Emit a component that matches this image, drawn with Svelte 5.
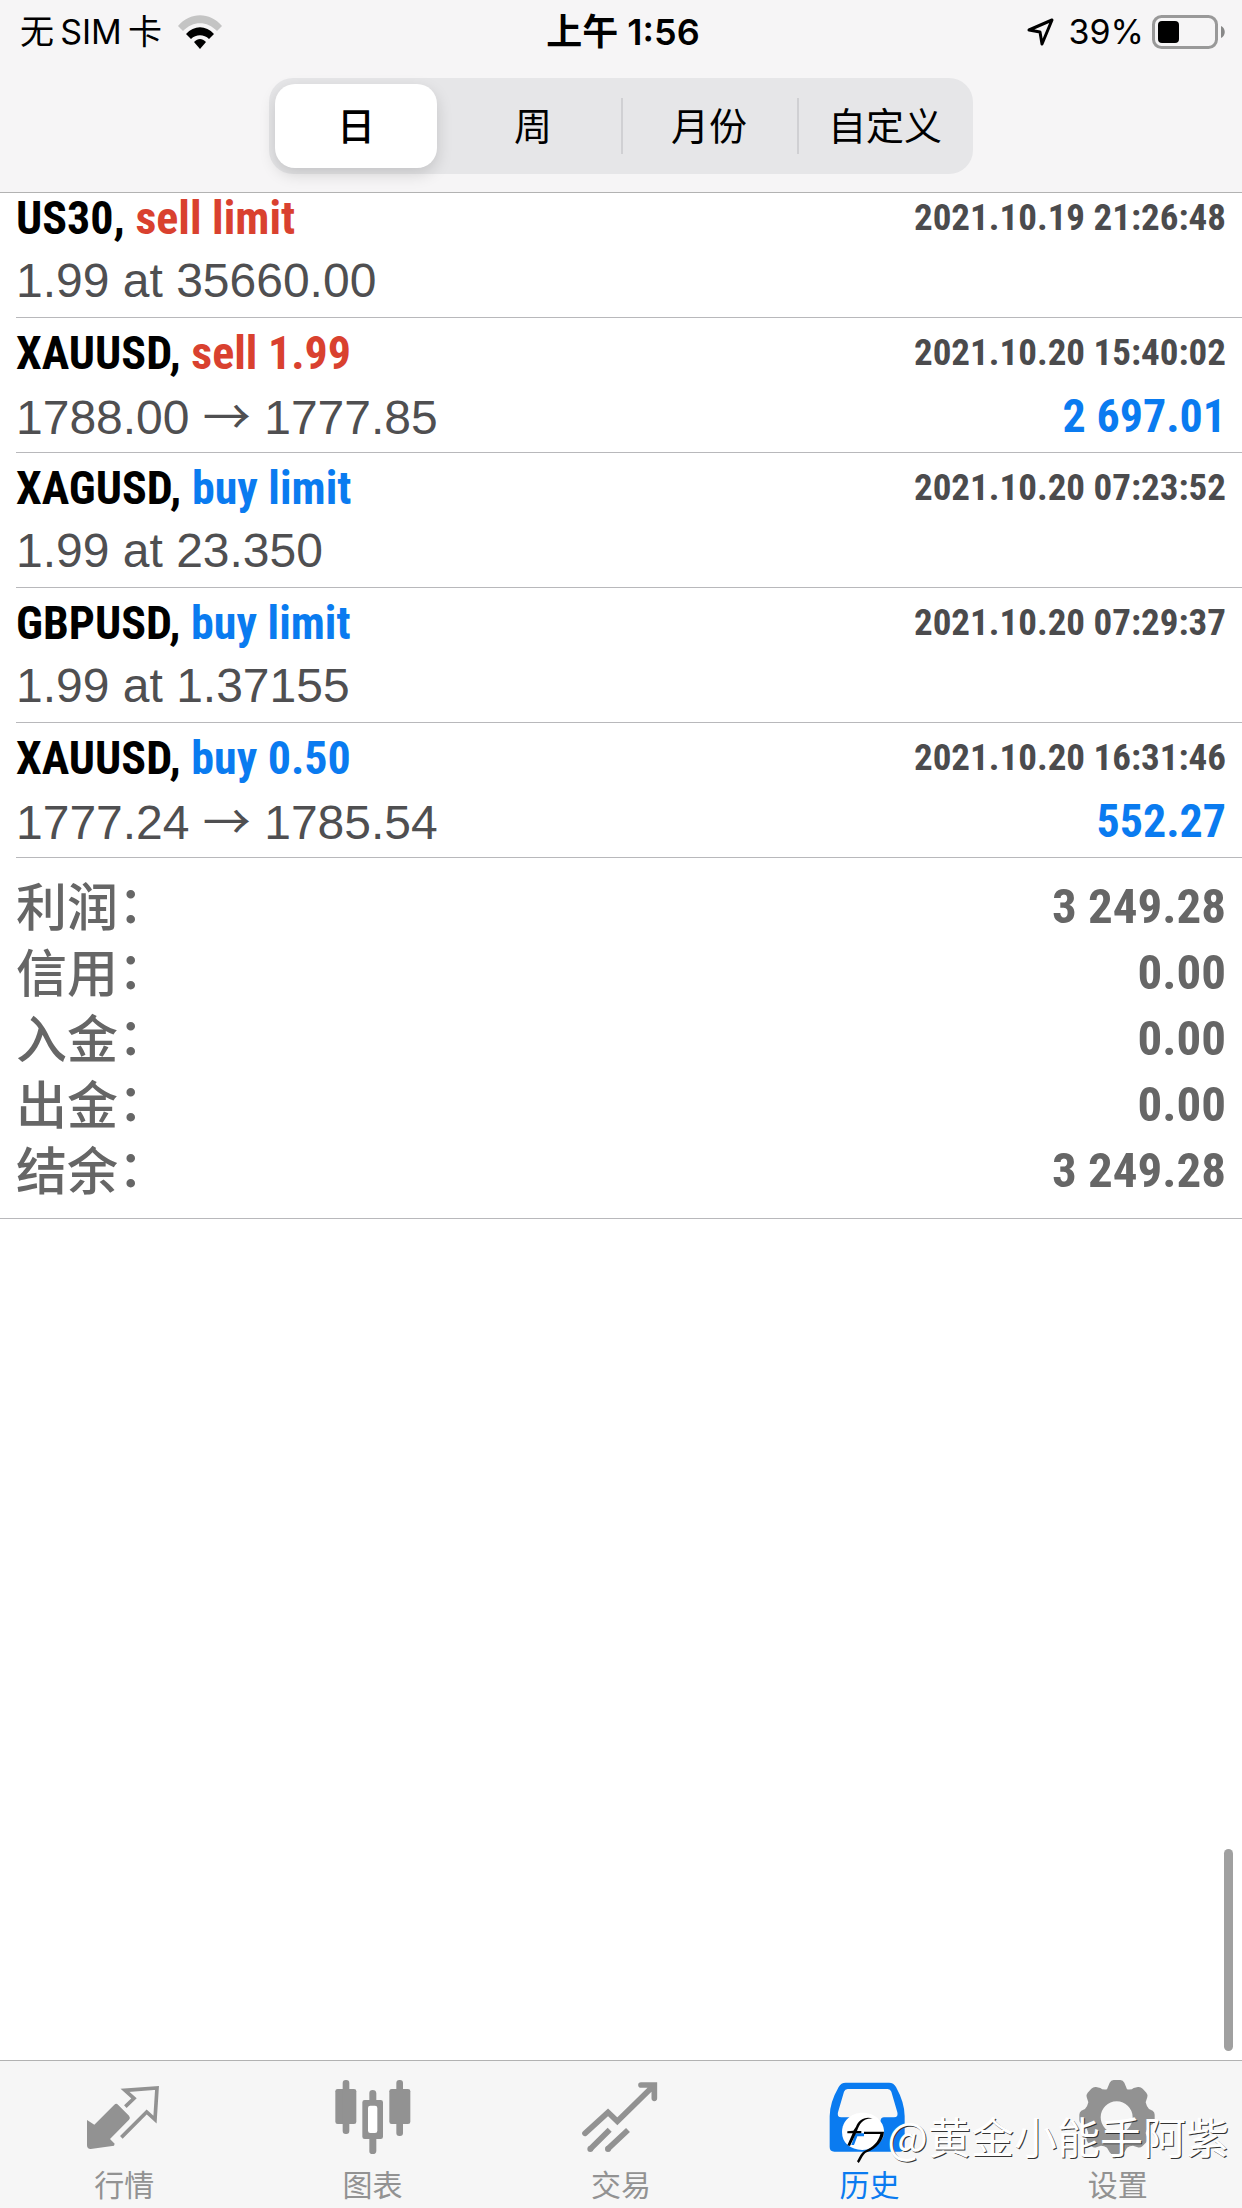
<script>
  const periods = ['日', '周', '月份', '自定义'];
  let period = $state('日');

  const deals = [
    { symbol: 'US30', side: 'sell', action: 'sell limit', time: '2021.10.19 21:26:48', volume: '1.99', price: '35660.00' },
    { symbol: 'XAUUSD', side: 'sell', action: 'sell 1.99', time: '2021.10.20 15:40:02', open: '1788.00', close: '1777.85', profit: '2 697.01' },
    { symbol: 'XAGUSD', side: 'buy', action: 'buy limit', time: '2021.10.20 07:23:52', volume: '1.99', price: '23.350' },
    { symbol: 'GBPUSD', side: 'buy', action: 'buy limit', time: '2021.10.20 07:29:37', volume: '1.99', price: '1.37155' },
    { symbol: 'XAUUSD', side: 'buy', action: 'buy 0.50', time: '2021.10.20 16:31:46', open: '1777.24', close: '1785.54', profit: '552.27' }
  ];

  const summary = [
    { label: '利润', value: '3 249.28' },
    { label: '信用', value: '0.00' },
    { label: '入金', value: '0.00' },
    { label: '出金', value: '0.00' },
    { label: '结余', value: '3 249.28' }
  ];
</script>

<div class="screen">
  <header class="top-bar">
    <div class="status-bar">
      <div class="status-left">
        <span>无&thinsp;SIM&thinsp;卡</span>
        <svg class="wifi" viewBox="0 0 44 34">
          <path fill="#c4c4c4" d="M0 11C12-3.500 32-3.500 44 11l-5 5C29 5.500 15 5.500 5 16z"/>
          <path d="M8 19c8-9 20-9 28 0l-5 5c-5-5-13-5-18 0z"/>
          <path d="M16 27c4-4 8-4 12 0l-6 7z"/>
        </svg>
      </div>
      <div class="status-time">上午 1:56</div>
      <div class="status-right">
        <svg class="location" viewBox="0 0 28 28">
          <path fill="none" stroke="#000" stroke-width="3" stroke-linejoin="round" d="M2 12 25 2 15 26 13 14z"/>
        </svg>
        <span>39%</span>
        <svg class="battery" viewBox="0 0 74 34">
          <rect x="1.500" y="1.500" width="63" height="31" rx="8" fill="none" stroke="#999" stroke-width="3"/>
          <rect x="6" y="6" width="21" height="22" rx="4"/>
          <path fill="#888" d="M69 11c5 2 5 10 0 12z"/>
        </svg>
      </div>
    </div>

    <div class="segmented">
      {#each periods as name}
        <button class:active={period === name} onclick={() => (period = name)}>{name}</button>
      {/each}
    </div>
  </header>

  <main class="history">
    <ul class="deals">
      {#each deals as deal}
        <li class="deal">
          <div class="deal-row">
            <h3 class="deal-title">{deal.symbol}, <span class={deal.side}>{deal.action}</span></h3>
            <time class="deal-time">{deal.time}</time>
          </div>
          <div class="deal-row">
            {#if deal.profit}
              <span class="deal-price">{deal.open} <span class="arrow">→</span> {deal.close}</span>
              <span class="deal-profit">{deal.profit}</span>
            {:else}
              <span class="deal-price">{deal.volume} at {deal.price}</span>
            {/if}
          </div>
        </li>
      {/each}
    </ul>

    <dl class="summary">
      {#each summary as item}
        <div class="summary-row">
          <dt>{item.label}<span class="colon">：</span></dt>
          <dd>{item.value}</dd>
        </div>
      {/each}
    </dl>

    <div class="scroll-thumb"></div>
  </main>

  <nav class="tab-bar">
    <a class="tab" href="#quotes">
      <svg viewBox="252 108 240 240">
        <path fill="currentColor" d="M261 240l22 14 60-60q6-5 11 0l33 33q5 6 0 12l-57 58 14 14-2 6-70 10q-11 0-11-11z"/>
        <path fill="none" stroke="currentColor" stroke-width="11" d="M376 200l26-25-27-24 96-7-6 95-25-23-76 76"/>
      </svg>
      <span>行情</span>
    </a>
    <a class="tab" href="#charts">
      <svg viewBox="998 108 240 240">
        <g fill="currentColor">
          <rect x="1005" y="147" width="63" height="105" rx="7"/>
          <rect x="1027" y="120" width="20" height="162" rx="9"/>
          <rect x="1167" y="147" width="63" height="105" rx="7"/>
          <rect x="1188" y="120" width="20" height="168" rx="9"/>
          <path d="M1107 180v-20q0-10 10-10t11 10v20h13q7 0 7 7v103q0 7-7 7h-13v35q0 10-11 10t-10-10v-35h-14q-7 0-7-7V187q0-7 7-7z"/>
        </g>
        <rect x="1103" y="197" width="28" height="82" rx="7" fill="#fff"/>
      </svg>
      <span>图表</span>
    </a>
    <a class="tab" href="#trade">
      <svg viewBox="123 108 240 240">
        <g fill="none" stroke="currentColor" stroke-width="17">
          <path stroke-linecap="round" d="M135 280l69-63 28 27 108-106M303 135h40v40"/>
          <path d="M150 328l59-59M202 328l62-58"/>
        </g>
        <g fill="currentColor">
          <circle cx="151" cy="327" r="9"/>
          <circle cx="204" cy="327" r="9"/>
        </g>
      </svg>
      <span>交易</span>
    </a>
    <a class="tab active" href="#history">
      <svg viewBox="118 108 240 240">
        <path fill="currentColor" fill-rule="evenodd" d="M168 128h130q14 0 21 13 26 47 26 88v92q0 14-14 14H134q-14 0-14-14v-92q0-41 27-88 7-13 21-13zm6 19q-8 0-11 8l-18 62q-4 15 10 15h30q9 0 10 9 4 20 20 20h38q16 0 20-20 1-9 10-9h30q14 0 10-15l-18-62q-3-8-11-8z"/>
      </svg>
      <span>历史</span>
    </a>
    <a class="tab" href="#settings">
      <svg viewBox="863 108 240 240">
        <path fill="currentColor" fill-rule="evenodd" d="M958 128q4-8 12-8h20q8 0 12 8l8 20q14 2 20-4l13-3q8-1 14 5l11 12q5 6 3 13l-5 16q3 14 10 20l11 5q6 4 6 12v16q0 8-6 12l-12 7q-6 8-9 20l5 14q2 8-3 14l-12 12q-6 5-14 3l-14-5q-10 0-18 6l-8 14q-4 7-12 7h-20q-8 0-12-7l-8-14q-8-6-18-6l-14 5q-8 2-14-3l-12-12q-5-6-3-14l5-14q-3-12-9-20l-12-7q-6-4-6-12v-16q0-8 6-12l11-5q7-6 10-20l-5-16q-2-7 3-13l11-12q6-6 14-5l13 3q6 6 20 4zM979 184a48 48 0 1 0 0 96a48 48 0 1 0 0-96z"/>
      </svg>
      <span>设置</span>
    </a>
  </nav>

  <div class="watermark">
    <svg viewBox="45 48 138 156">
      <path fill="#fff" d="M110 50c38 0 64 28 64 56 0 36-32 48-48 54-44 8-78-14-78-52 0-32 26-58 62-58z"/>
      <path fill="#0a7bf0" d="M88 112h26v9H94l-10 26h-8z"/>
      <path d="M142 68c-26-8-44 4-52 24l-8 12-18 2v6h16l-16 36 8 2 18-38h16v-7H93c8-22 18-40 49-37z"/>
      <path d="M114 107h60c-2 28-22 50-52 62-12 6-14 20-24 32l-5-5c8-14 12-26 24-32 24-10 40-26 46-50h-49z"/>
    </svg>
    <span>@黄金小能手阿紫</span>
  </div>
</div>

<style>
  :global(body) {
    margin: 0;
    background: #fff;
  }

  .screen {
    position: relative;
    display: flex;
    flex-direction: column;
    min-height: 100vh;
    color: #000;
    font-family: "Liberation Sans", "Noto Sans CJK SC", sans-serif;
  }

  .top-bar {
    box-sizing: border-box;
    height: 193px;
    background: #f6f5f6;
    border-bottom: 1px solid #b2b2b2;
  }

  .status-bar {
    display: grid;
    grid-template-columns: 1fr auto 1fr;
    align-items: center;
    height: 64px;
    margin-bottom: 14px;
    padding: 0 16px 0 20px;
    font-family: Inter, "Noto Sans CJK SC", sans-serif;
    font-size: 34px;
    line-height: 48px;
  }

  .status-left,
  .status-right {
    display: flex;
    align-items: center;
    gap: 16px;
  }

  .status-right {
    justify-content: flex-end;
    gap: 8px;
  }

  .status-time {
    font-size: 36px;
    font-weight: 600;
  }

  .wifi {
    width: 44px;
    height: 34px;
  }

  .location {
    width: 28px;
    height: 28px;
    margin-right: 6px;
  }

  .battery {
    width: 74px;
    height: 34px;
  }

  .segmented {
    box-sizing: border-box;
    display: grid;
    grid-template-columns: repeat(4, 1fr);
    width: 704px;
    max-width: 100%;
    height: 96px;
    margin: 0 auto;
    padding: 6px 0;
    background: #e6e6e8;
    border-radius: 24px;
  }

  .segmented button {
    position: relative;
    padding: 0 0 4px;
    border: none;
    border-radius: 20px;
    background: transparent;
    color: #000;
    font-family: "Noto Sans CJK SC", sans-serif;
    font-size: 38px;
    line-height: 48px;
    cursor: pointer;
  }

  .segmented button.active {
    margin: 0 8px 0 6px;
    background: #fff;
    font-weight: 500;
    box-shadow: 0 6px 16px rgba(0, 0, 0, 0.15);
  }

  .segmented button:nth-child(n + 3)::before {
    content: '';
    position: absolute;
    left: 0;
    top: 14px;
    bottom: 14px;
    width: 2px;
    background: #d0d0d3;
  }

  .history {
    position: relative;
    flex: 1;
    overflow: hidden;
  }

  /* the list is scrolled a little under the header */
  .deals {
    margin: -10px 0 0;
    padding: 0 0 0 16px;
    list-style: none;
  }

  .deal {
    box-sizing: border-box;
    height: 135px;
    padding: 3px 16px 5px 0;
    border-bottom: 1px solid #b8b8bb;
  }

  .deal-row {
    display: flex;
    justify-content: space-between;
    align-items: center;
    height: 63px;
    line-height: 48px;
    white-space: nowrap;
  }

  .deal-title,
  .deal-time,
  .deal-profit,
  .summary dd {
    margin: 0;
    font-family: "Roboto Condensed", "Liberation Sans Narrow", sans-serif;
    font-weight: 700;
  }

  .deal-title,
  .deal-profit {
    font-size: 46px;
  }

  .sell {
    color: #d9412f;
  }

  .buy,
  .deal-profit {
    color: #0a7bf0;
  }

  .deal-time {
    color: #4b4b4d;
    font-size: 37px;
  }

  .deal-price {
    color: #4f4f51;
    font-size: 48px;
  }

  .arrow {
    font-family: "Noto Sans CJK SC", sans-serif;
    line-height: 1;
  }

  .summary {
    margin: 0;
    padding: 16px 16px 14px;
    border-bottom: 1px solid #b8b8bb;
    color: #666;
  }

  .summary-row {
    display: flex;
    justify-content: space-between;
    height: 66px;
    line-height: 66px;
  }

  .summary dt {
    font-family: "Noto Sans CJK SC", sans-serif;
    font-size: 51px;
    font-weight: 500;
    line-height: 60px;
  }

  /* the JP face centres the colon, halt trims it to half width */
  .colon {
    font-family: "Noto Sans CJK JP", sans-serif;
    font-feature-settings: "halt";
    line-height: 1;
  }

  .summary dd {
    font-size: 49px;
  }

  .scroll-thumb {
    position: absolute;
    right: 9px;
    bottom: 9px;
    width: 9px;
    height: 202px;
    border-radius: 5px;
    background: #a0a0a0;
  }

  .tab-bar {
    box-sizing: border-box;
    display: grid;
    grid-template-columns: repeat(5, 1fr);
    height: 148px;
    padding-top: 15px;
    background: #f6f6f6;
    border-top: 1px solid #b2b2b2;
  }

  .tab {
    display: flex;
    flex-direction: column;
    align-items: center;
    gap: 5px;
    color: #929292;
    font-family: "Noto Sans CJK SC", sans-serif;
    font-size: 30px;
    line-height: 44px;
    text-decoration: none;
  }

  .tab.active {
    color: #0a7bf0;
  }

  .tab svg {
    width: 80px;
    height: 80px;
  }

  .watermark {
    position: absolute;
    right: 13px;
    bottom: 44px;
    display: flex;
    align-items: center;
    color: #fff;
    font-family: "Noto Sans CJK SC", sans-serif;
    font-size: 43px;
    line-height: 52px;
    text-shadow: 1px 1px 0 #333;
    pointer-events: none;
  }

  .watermark svg {
    width: 46px;
    height: 52px;
    margin-top: 6px;
  }
</style>
